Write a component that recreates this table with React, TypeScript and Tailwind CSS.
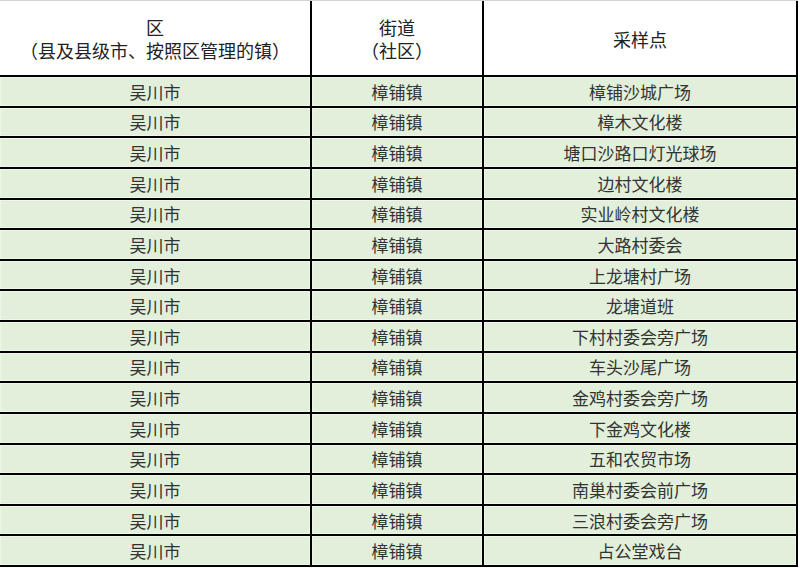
import React from "react";

const sites = [
  "樟铺沙城广场",
  "樟木文化楼",
  "塘口沙路口灯光球场",
  "边村文化楼",
  "实业岭村文化楼",
  "大路村委会",
  "上龙塘村广场",
  "龙塘道班",
  "下村村委会旁广场",
  "车头沙尾广场",
  "金鸡村委会旁广场",
  "下金鸡文化楼",
  "五和农贸市场",
  "南巢村委会前广场",
  "三浪村委会旁广场",
  "占公堂戏台",
];

export default function App() {
  return (
    <div
      className="w-[800px] h-[568px] bg-white overflow-hidden text-[17px] text-[#333]"
      style={{ fontFamily: '"Noto Sans CJK SC", "Noto Sans", sans-serif' }}
    >
      <div className="w-[798px] border-t border-[#d4d4d4]">
        <div className="flex h-[76px] border-b-2 border-black text-[#222] text-[18px]">
          <div className="w-[312px] border-r-2 border-black flex flex-col items-center justify-center leading-[23px] pt-[2px]">
            <div>区</div>
            <div>（县及县级市、按照区管理的镇）</div>
          </div>
          <div className="w-[172px] border-r-2 border-black flex flex-col items-center justify-center leading-[23px] pt-[2px]">
            <div>街道</div>
            <div>（社区）</div>
          </div>
          <div className="w-[314px] border-r-2 border-black flex items-center justify-center pt-[2px]">
            采样点
          </div>
        </div>
        {sites.map((s, i) => (
          <div
            key={i}
            className="flex h-[30.625px] border-b-2 border-black bg-[#e2efda] leading-none"
          >
            <div className="w-[312px] border-r-2 border-black flex items-center justify-center shadow-[inset_0_0_0_1px_#eef6ea]">
              吴川市
            </div>
            <div className="w-[172px] border-r-2 border-black flex items-center justify-center shadow-[inset_0_0_0_1px_#eef6ea]">
              樟铺镇
            </div>
            <div className="w-[314px] border-r-2 border-black flex items-center justify-center shadow-[inset_0_0_0_1px_#eef6ea]">
              {s}
            </div>
          </div>
        ))}
      </div>
    </div>
  );
}
